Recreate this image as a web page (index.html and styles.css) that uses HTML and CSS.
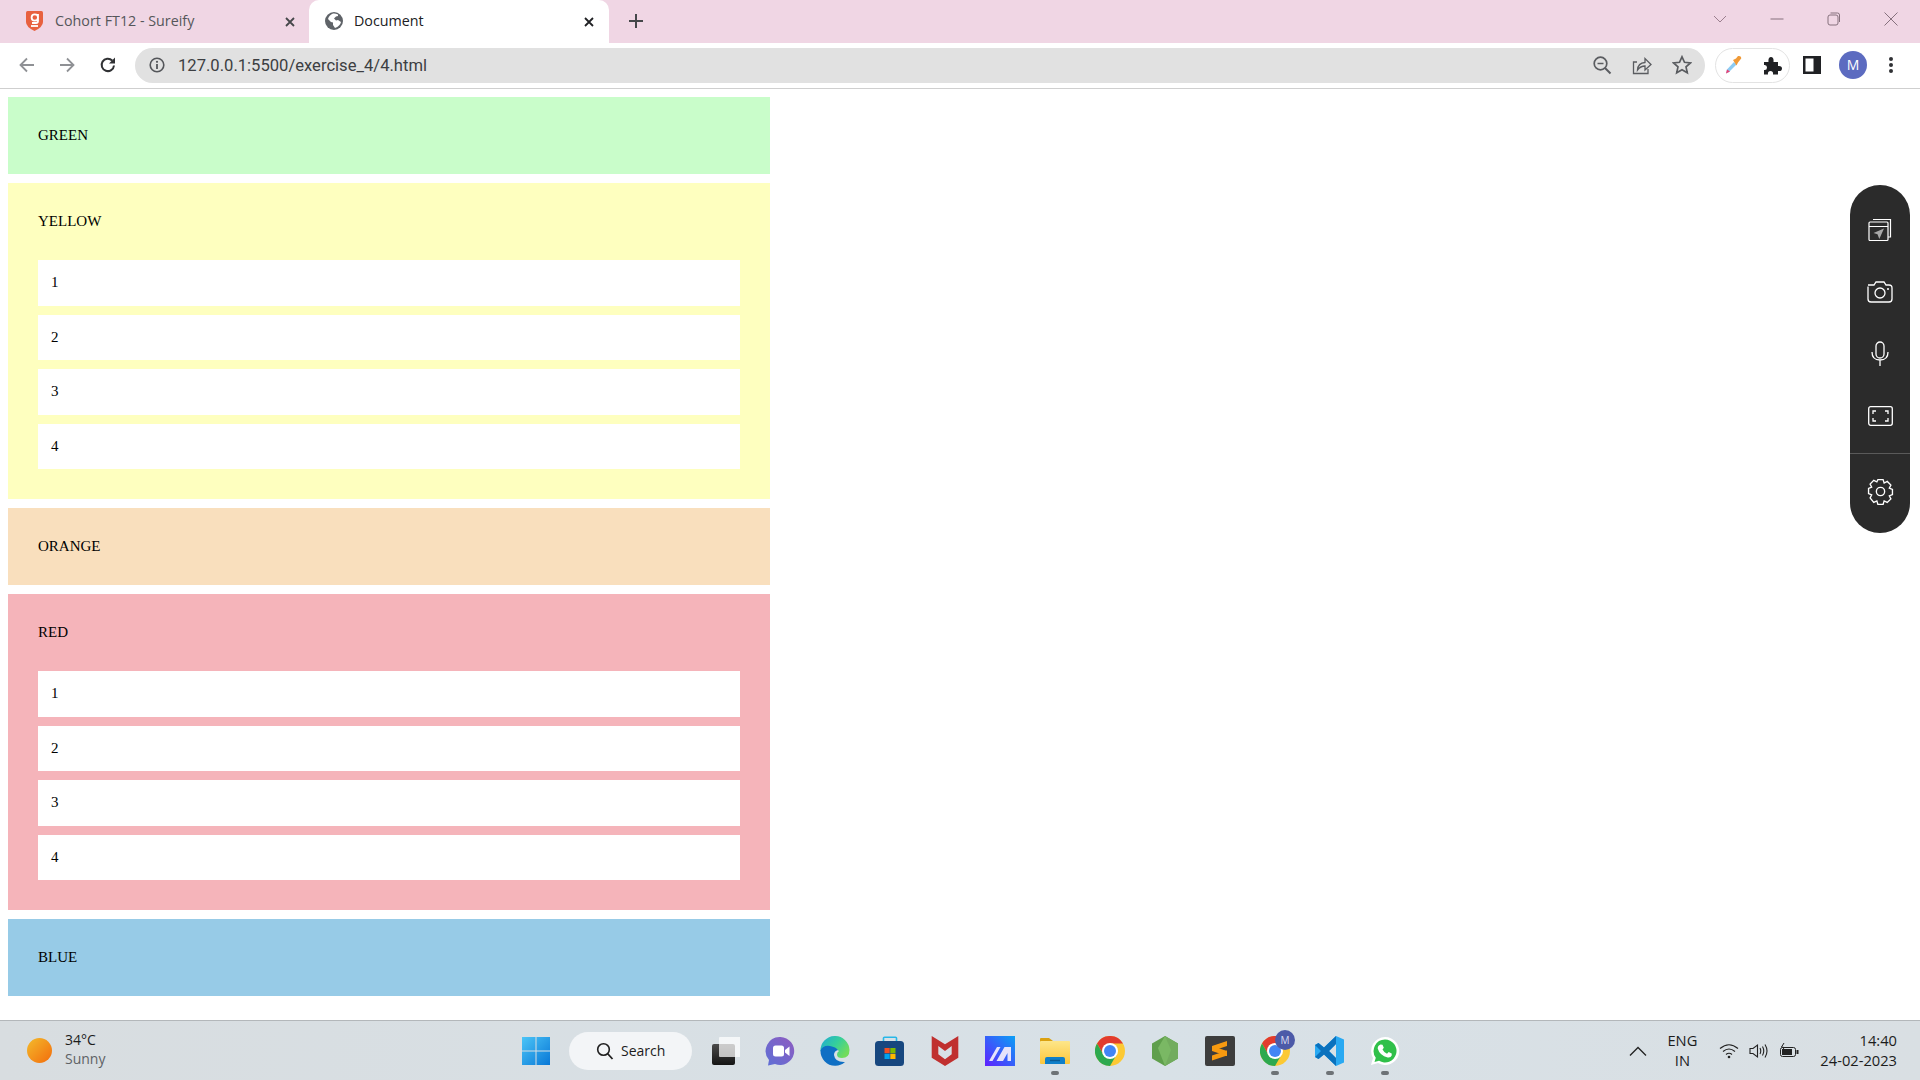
FILE: index.html
```html
<!DOCTYPE html>
<html lang="en">
<head>
    <meta charset="UTF-8">
    <title>Document</title>
    <link rel="stylesheet" href="styles.css">
</head>
<body>
    <div class="tabstrip">
        <div class="tab">
            <svg class="favicon" width="17" height="20" viewBox="0 0 17 20"><path d="M0 1.5Q0 0 1.5 0h14Q17 0 17 1.5V11q0 5-8.500 9Q0 16 0 11z" fill="#e8613f"/><path d="M12 3v7q0 2-2 2H6M12 6.500a3.200 3.200 0 1 1-6.400 0 3.200 3.200 0 0 1 6.400 0z" fill="none" stroke="#fff" stroke-width="1.800"/><path d="M5 15h7" stroke="#fff" stroke-width="1.800"/></svg>
            <span class="tab-title">Cohort FT12 - Sureify</span>
            <svg class="tab-close" width="12" height="12" viewBox="0 0 12 12"><path d="M2 2l8 8M10 2l-8 8" stroke="#45474a" stroke-width="1.800"/></svg>
        </div>
        <div class="tab tab-active">
            <svg class="favicon" width="18" height="18" viewBox="0 0 18 18"><circle cx="9" cy="9" r="9" fill="#5f6368"/><path d="M8 1.500Q4 3 3 7l3 3 2 .5V13l2 3q5-2 6-6l-3-2-2 .5-2-2 2-2 2-.5V2.500Q10 1 8 1.500z" fill="#fff"/></svg>
            <span class="tab-title">Document</span>
            <svg class="tab-close" width="12" height="12" viewBox="0 0 12 12"><path d="M2 2l8 8M10 2l-8 8" stroke="#202124" stroke-width="1.800"/></svg>
        </div>
        <svg class="newtab" width="16" height="16" viewBox="0 0 16 16"><path d="M8 1v14M1 8h14" stroke="#45474a" stroke-width="2"/></svg>
        <div class="window-controls">
            <svg width="16" height="16" viewBox="0 0 16 16"><path d="M2 5l6 6 6-6" fill="none" stroke="#9b7f8e" stroke-width="1"/></svg>
            <svg width="16" height="16" viewBox="0 0 16 16"><path d="M1.500 8h13" stroke="#86717d" stroke-width="1"/></svg>
            <svg width="16" height="16" viewBox="0 0 16 16"><rect x="2" y="4" width="10" height="10" rx="2" fill="none" stroke="#86717d"/><path d="M4.500 2h7q2 0 2 2v7" fill="none" stroke="#86717d"/></svg>
            <svg width="16" height="16" viewBox="0 0 16 16"><path d="M1.500 1.500l13 13M14.500 1.500l-13 13" stroke="#86717d" stroke-width="1"/></svg>
        </div>
    </div>

    <div class="toolbar">
        <div class="nav-btn"><svg width="18" height="18" viewBox="0 0 18 18"><path d="M16 9H3M9 2.500L2.500 9 9 15.500" fill="none" stroke="#8f9195" stroke-width="1.800"/></svg></div>
        <div class="nav-btn"><svg width="18" height="18" viewBox="0 0 18 18"><path d="M2 9h13M9 2.500L15.500 9 9 15.500" fill="none" stroke="#8f9195" stroke-width="1.800"/></svg></div>
        <div class="nav-btn nav-reload"><svg width="18" height="18" viewBox="0 0 18 18"><path d="M15 9.500A6.200 6.200 0 1 1 13.200 4.500" fill="none" stroke="#303134" stroke-width="2"/><path d="M16 1.500V7.500H10z" fill="#303134"/></svg></div>
        <div class="omnibox">
            <svg class="info" width="16" height="16" viewBox="0 0 16 16"><circle cx="8" cy="8" r="6.800" fill="none" stroke="#54565a" stroke-width="1.600"/><path d="M8 7v5" stroke="#54565a" stroke-width="1.800"/><circle cx="8" cy="4.800" r="1.100" fill="#54565a"/></svg>
            <span class="url">127.0.0.1:5500/exercise_4/4.html</span>
            <div class="omni-icons">
                <svg width="20" height="20" viewBox="0 0 20 20"><circle cx="8.500" cy="8.500" r="6.300" fill="none" stroke="#5a5c60" stroke-width="1.700"/><path d="M5.500 8.500h6" stroke="#5a5c60" stroke-width="1.500"/><path d="M13 13l5.500 5.500" stroke="#5a5c60" stroke-width="2"/></svg>
                <svg width="20" height="20" viewBox="0 0 20 20"><path d="M5 7H1.500v11.500H16V14" fill="none" stroke="#5a5c60" stroke-width="1.300"/><path d="M5.500 15q.5-7 7.500-7.500V3.500l6 6-6 5.500V11q-4.500 0-7.500 4z" fill="none" stroke="#5a5c60" stroke-width="1.300"/></svg>
                <svg width="20" height="20" viewBox="0 0 20 20"><path d="M10 1.800l2.500 5.500 6 .6-4.500 4 1.300 5.900-5.300-3-5.300 3L6 11.900l-4.500-4 6-.6z" fill="none" stroke="#5a5c60" stroke-width="1.700"/></svg>
            </div>
        </div>
        <div class="ext-pill">
            <svg width="18" height="20" viewBox="0 0 18 20"><path d="M2 18.500l1-4L10 7l2.500 2.500L5 17z" fill="#8ccbf2"/><path d="M2 18.500l1-4 3 2z" fill="#ea3f73"/><path d="M9 5l3-1.500L14 1q2-.5 3 1t-1 3l-2 2.500-1.500 3z" fill="#f09a37"/></svg>
            <svg width="19" height="19" viewBox="0 0 19 19"><path d="M1 6h4.500Q5 1 8 1t2.500 5H15v4q4-.5 4 2.500T15 15v3.500H10q.5-3.500-2.500-3.500T5 18.500H1V14q3 .5 3-2.500T1 9z" fill="#202124"/></svg>
        </div>
        <div class="toolbar-end">
            <svg width="18" height="18" viewBox="0 0 18 18"><rect width="18" height="18" fill="#202124"/><rect x="2.500" y="2.500" width="8" height="13" fill="#fff"/></svg>
            <div class="avatar">M</div>
            <svg width="6" height="18" viewBox="0 0 6 18"><circle cx="3" cy="3" r="2" fill="#303134"/><circle cx="3" cy="9" r="2" fill="#303134"/><circle cx="3" cy="15" r="2" fill="#303134"/></svg>
        </div>
    </div>

    <main class="page">
        <div class="box green">
            <div class="box-title">GREEN</div>
        </div>
        <div class="box yellow">
            <div class="box-title">YELLOW</div>
            <div class="items">
                <div class="item">1</div>
                <div class="item">2</div>
                <div class="item">3</div>
                <div class="item">4</div>
            </div>
        </div>
        <div class="box orange">
            <div class="box-title">ORANGE</div>
        </div>
        <div class="box red">
            <div class="box-title">RED</div>
            <div class="items">
                <div class="item">1</div>
                <div class="item">2</div>
                <div class="item">3</div>
                <div class="item">4</div>
            </div>
        </div>
        <div class="box blue">
            <div class="box-title">BLUE</div>
        </div>

        <div class="capture-bar">
            <div class="capture-btn"><svg width="24" height="24" viewBox="0 0 24 24"><path d="M5 1.500h17.500V19H20" fill="none" stroke="#fff" stroke-width="1.200"/><rect x="1" y="4" width="19" height="18.500" rx="1" fill="#2b2b2b" stroke="#fff" stroke-width="1.200"/><path d="M1 8.500h19" stroke="#fff"/><path d="M16 10.500L5.500 15l4 1.200 1.800 4.800z" fill="#a8a8a8"/></svg></div>
            <div class="capture-btn"><svg width="26" height="22" viewBox="0 0 26 22"><path d="M1 5.500V18q0 3 3 3h18q3 0 3-3V7q0-3-3-3h-3l-2-3H9L7 4H1" fill="none" stroke="#fff" stroke-width="1.300"/><circle cx="13" cy="12" r="5" fill="none" stroke="#fff" stroke-width="1.300"/><circle cx="21" cy="8" r="1" fill="#fff"/></svg></div>
            <div class="capture-btn"><svg width="18" height="26" viewBox="0 0 18 26"><rect x="5" y="1" width="8" height="16" rx="4" fill="none" stroke="#fff" stroke-width="1.300"/><path d="M1 11q0 8 8 8t8-8M9 19v6" fill="none" stroke="#fff" stroke-width="1.300"/></svg></div>
            <div class="capture-btn"><svg width="25" height="20" viewBox="0 0 25 20"><rect x=".7" y=".7" width="23.600" height="18.600" rx="2" fill="none" stroke="#fff" stroke-width="1.300"/><path d="M5 8V5h3M17 5h3v3M20 12v3h-3M8 15H5v-3" fill="none" stroke="#fff" stroke-width="1.300"/></svg></div>
            <div class="capture-sep"></div>
            <div class="capture-btn capture-settings"><svg width="27" height="27" viewBox="0 0 26 26"><path d="M10.500 1.500h5l1 3.300 3-1.500 3.500 3.500-1.500 3 3 1.200v5l-3 1.200 1.500 3-3.500 3.300-3-1.500-1 3.500h-5l-1-3.500-3 1.500L3 19.200l1.500-3-3-1.200V10l3-1.200-1.500-3 3.500-3.500 3 1.500z" fill="none" stroke="#fff" stroke-width="1.300"/><circle cx="13" cy="13" r="4" fill="none" stroke="#fff" stroke-width="1.300"/></svg></div>
        </div>
    </main>

    <footer class="taskbar">
        <div class="weather">
            <div class="sun"></div>
            <div class="weather-text">
                <div>34°C</div>
                <div class="muted">Sunny</div>
            </div>
        </div>
        <div class="task-icon">
            <svg width="30" height="30" viewBox="0 0 30 30"><defs><linearGradient id="win" x1="0" y1="0" x2="1" y2="1"><stop offset="0" stop-color="#4cc5f7"/><stop offset="1" stop-color="#0877d6"/></linearGradient></defs><path d="M1 1h13.500v13.500H1zM15.500 1H29v13.500H15.500zM1 15.500h13.500V29H1zM15.500 15.500H29V29H15.500z" fill="url(#win)"/></svg>
        </div>
        <div class="search-pill">
            <svg width="18" height="18" viewBox="0 0 18 18"><circle cx="7.500" cy="7.500" r="5.800" fill="none" stroke="#1f1f1f" stroke-width="1.600"/><path d="M11.500 11.500l5 5.500" stroke="#1f1f1f" stroke-width="1.800"/></svg>
            <span>Search</span>
        </div>
        <div class="task-icon task-first">
            <svg width="30" height="30" viewBox="0 0 30 30"><defs><linearGradient id="tv" x1="0" y1="0" x2="0" y2="1"><stop offset="0" stop-color="#4a4a4a"/><stop offset="1" stop-color="#141414"/></linearGradient></defs><rect x="2" y="8" width="23" height="21" rx="2" fill="url(#tv)"/><rect x="9" y="1" width="22" height="20" rx="1" fill="#fff" fill-opacity=".72"/></svg>
        </div>
        <div class="task-icon">
            <svg width="30" height="30" viewBox="0 0 30 30"><defs><linearGradient id="meet" x1="1" y1="0" x2="0" y2="1"><stop offset="0" stop-color="#8f5cc0"/><stop offset="1" stop-color="#5d6fd6"/></linearGradient></defs><path d="M15.500 1a14 14 0 1 1-5.500 27l-7 1.500 1-5.500A14 14 0 0 1 15.500 1z" fill="url(#meet)"/><rect x="8" y="9.500" width="11" height="11" rx="2.500" fill="#fff"/><path d="M20 14l4.500-3.500v9.500L20 16.500z" fill="#fff"/></svg>
        </div>
        <div class="task-icon">
            <svg width="30" height="30" viewBox="0 0 30 30"><defs><linearGradient id="edge" x1="0" y1="0" x2="1" y2=".6"><stop offset="0" stop-color="#1fa9d8"/><stop offset=".55" stop-color="#35cf9b"/><stop offset="1" stop-color="#72dc5c"/></linearGradient></defs><path d="M.5 15A14.500 14.500 0 0 1 29.500 14Q29.500 22 22 22 17 22 17 18.500 17 16 19 15 15 11 10 13 3 16 .5 15z" fill="url(#edge)"/><path d="M.5 14.500Q3 9 10 10 16 11 18 14 14 15 14 19 15 26.500 25 26 20.500 30 15 29.800A14.800 14.800 0 0 1 .5 14.500z" fill="#0f6fc4"/></svg>
        </div>
        <div class="task-icon">
            <svg width="30" height="30" viewBox="0 0 30 30"><path d="M8.500 6V2q0-.800 1-.800h11q1 0 1 .8v4" fill="none" stroke="#27b7e8" stroke-width="1.600"/><rect x="0" y="5" width="29" height="25" rx="3.500" fill="#17477f"/><path d="M9.500 12h5.200v5.200H9.500z" fill="#f25022"/><path d="M15.300 12h5.200v5.200h-5.200z" fill="#7fba00"/><path d="M9.500 17.800h5.200V23H9.500z" fill="#00a4ef"/><path d="M15.300 17.800h5.200V23h-5.200z" fill="#ffb900"/></svg>
        </div>
        <div class="task-icon">
            <svg width="30" height="30" viewBox="0 0 30 30"><path d="M1.700 0L15 8.300 28.300 0V21.700L15 30 1.700 21.700zM8.300 10V18.300L15 23.300 21.700 18.300V10L15 15z" fill="#c0302f" fill-rule="evenodd"/></svg>
        </div>
        <div class="task-icon">
            <svg width="30" height="30" viewBox="0 0 30 30"><defs><linearGradient id="mark" x1="1" y1="0" x2="0" y2="1"><stop offset="0" stop-color="#0aa0f5"/><stop offset="1" stop-color="#6020ff"/></linearGradient></defs><rect width="30" height="30" fill="url(#mark)"/><path d="M4 25L12 11h3.500l-8 14zM11.500 25l8-14H26v14h-3.500v-8L18 25z" fill="#e6e3fb"/></svg>
        </div>
        <div class="task-icon">
            <svg width="30" height="30" viewBox="0 0 30 30"><defs><linearGradient id="fold" x1="0" y1="0" x2="0" y2="1"><stop offset="0" stop-color="#fde68a"/><stop offset="1" stop-color="#fcc63b"/></linearGradient></defs><path d="M0 3q0-1 1-1h8l4 3v3H0z" fill="#dba110"/><rect y="5" width="30" height="23" rx="1" fill="url(#fold)"/><path d="M5 23q0-2 2-2h16q2 0 2 2v5H5z" fill="#0f7fc9"/><path d="M10 24.500h10" stroke="#0a5a93" stroke-width="1.400"/></svg>
        </div>
        <div class="task-icon">
            <svg width="30" height="30" viewBox="0 0 30 30"><circle cx="15" cy="15" r="15" fill="#fcc934"/><path d="M2 7.500A15 15 0 0 1 28 7.500H15L8.500 18.750z" fill="#e23b2e"/><path d="M2 7.500A15 15 0 0 0 15 30L21.500 18.750H8.500z" fill="#2da94f"/><circle cx="15" cy="15" r="8" fill="#fff"/><circle cx="15" cy="15" r="6" fill="#4285f4"/></svg>
        </div>
        <div class="task-icon">
            <svg width="30" height="30" viewBox="0 0 30 30"><path d="M15 0l13 7.500v15L15 30 2 22.500v-15z" fill="#5f9f4c"/><path d="M15 0l13 7.500v15L15 30z" fill="#72ac5e"/><path d="M15 0L8 12l7 18 6-16z" fill="#7ab864"/></svg>
        </div>
        <div class="task-icon">
            <svg width="30" height="30" viewBox="0 0 30 30"><rect width="30" height="30" rx="2" fill="#3d3d3d"/><path d="M7 10l15-5v5L7 15zM7 10l15 5v5L7 15zM22 14.500v5l-15 5v-5z" fill="#f79a10"/></svg>
        </div>
        <div class="task-icon running">
            <svg width="30" height="30" viewBox="0 0 30 30"><circle cx="15" cy="15" r="15" fill="#fcc934"/><path d="M2 7.500A15 15 0 0 1 28 7.500H15L8.500 18.750z" fill="#e23b2e"/><path d="M2 7.500A15 15 0 0 0 15 30L21.500 18.750H8.500z" fill="#2da94f"/><circle cx="15" cy="15" r="8" fill="#fff"/><circle cx="15" cy="15" r="6" fill="#4285f4"/></svg>
            <div class="profile-badge">M</div>
        </div>
        <div class="task-icon running">
            <svg width="30" height="30" viewBox="0 0 30 30"><path d="M21 0l8 3.500v23L21 30 9 18.500l-5.500 4.500L0 21v-12l3.500-2L9 11.500zM21 8l-7 7 7 7z" fill="#29a9f2" fill-rule="evenodd"/><path d="M21 0L9 11.500 3.500 7 0 9l6 6-6 6 3.500 2L9 18.500 21 30v-8l-7-7 7-7z" fill="#0a71bd"/></svg>
        </div>
        <div class="task-icon running">
            <svg width="30" height="30" viewBox="0 0 30 30"><path d="M15 1a14 14 0 1 1-7 26l-7 2 2-7A14 14 0 0 1 15 1z" fill="#fff"/><path d="M15 3.500a11.500 11.500 0 1 1-6 21.300l-4.500 1.300 1.300-4.400A11.500 11.500 0 0 1 15 3.500z" fill="#30c04a"/><path d="M10.500 8.500l2 .2 1.300 3-1.300 1.800q1.500 3 4.500 4.300l1.700-1.700 3 1.400v2q-1 2.500-4 2-8-2-10-9 0-3 2.800-4z" fill="#fff"/></svg>
        </div>
        <div class="tray">
            <svg width="18" height="10" viewBox="0 0 18 10"><path d="M1 9.500L9 1.500l8 8" fill="none" stroke="#222" stroke-width="1.300"/></svg>
            <div class="lang">
                <div>ENG</div>
                <div>IN</div>
            </div>
            <div class="tray-icons">
                <svg width="20" height="16" viewBox="0 0 20 16"><path d="M1 5.500q9-7.500 18 0M4 8.500q6-5 12 0M7 11.500q3-2.500 6 0" fill="none" stroke="#222" stroke-width="1.200"/><circle cx="10" cy="14" r="1.300" fill="#222"/></svg>
                <svg width="20" height="16" viewBox="0 0 20 16"><path d="M1 5.500h3L8.500 2v12L4 10.500H1z" fill="none" stroke="#222" stroke-width="1.100"/><path d="M11 5q1.500 3 0 6M13.500 3.500q2.500 4.500 0 9M16 1.500q4 6.500 0 13" fill="none" stroke="#222" stroke-width="1.100"/></svg>
                <svg width="20" height="16" viewBox="0 0 20 16"><rect x="1.500" y="4.500" width="15" height="9" rx="2" fill="none" stroke="#222"/><rect x="3" y="6" width="10" height="6" fill="#222"/><rect x="17.500" y="7" width="2" height="4" fill="#222"/><path d="M5 0L2.500 4 5 4.500 3.500 8" fill="none" stroke="#222" stroke-width="1"/></svg>
            </div>
            <div class="clock">
                <div>14:40</div>
                <div>24-02-2023</div>
            </div>
        </div>
    </footer>
</body>
</html>
```

FILE: styles.css
```css
* {
    box-sizing: border-box;
}

html, body {
    margin: 0;
    padding: 0;
    height: 100%;
}

body {
    display: flex;
    flex-direction: column;
    height: 1080px;
    overflow: hidden;
    background-color: #fff;
    font-family: "Liberation Serif", serif;
}

/* browser chrome */
.tabstrip {
    display: flex;
    align-items: stretch;
    height: 43px;
    background-color: #f0d6e4;
    font-family: "Open Sans", sans-serif;
    font-size: 14.3px;
}

.tab {
    display: flex;
    align-items: center;
    width: 300px;
    padding: 0 14px 0 16px;
    color: #55565a;
}

.tab:first-child {
    width: 309px;
    padding-left: 26px;
    padding-right: 13px;
}

.tab-active {
    background-color: #fff;
    border-radius: 10px 10px 0 0;
    color: #202124;
}

.favicon {
    flex: none;
    margin-right: 12px;
    margin-bottom: 1px;
}

.tab-active .favicon {
    margin-right: 11px;
}

.tab-title {
    flex: 1;
    margin-bottom: 2px;
    white-space: nowrap;
}

.newtab {
    align-self: center;
    margin: 0 0 2px 19px;
}

.window-controls {
    display: flex;
    align-items: center;
    gap: 41px;
    margin-left: auto;
    padding: 0 21px 6px 0;
}

.toolbar {
    display: flex;
    align-items: center;
    height: 46px;
    padding: 0 0 1px 7px;
    border-bottom: 1px solid #cfcfcf;
    background-color: #fff;
}

.nav-btn {
    display: flex;
    justify-content: center;
    align-items: center;
    width: 40px;
}

.nav-reload {
    padding-left: 2px;
}

.omnibox {
    display: flex;
    align-items: center;
    width: 1570px;
    height: 35px;
    margin-left: 8px;
    padding: 0 13px 0 14px;
    background-color: #e1e1e1;
    border-radius: 18px;
}

.url {
    margin-left: 13px;
    font-family: "Roboto", sans-serif;
    font-size: 16.6px;
    color: #3c3e42;
}

.omni-icons {
    display: flex;
    align-items: center;
    gap: 20px;
    margin-left: auto;
}

.ext-pill {
    display: flex;
    justify-content: space-between;
    align-items: center;
    width: 75px;
    height: 35px;
    margin-left: 10px;
    padding: 0 7px 0 8px;
    border: 1px solid #e3e3e3;
    border-radius: 18px;
}

.toolbar-end {
    display: flex;
    align-items: center;
    margin-left: 13px;
}

.avatar {
    width: 28px;
    height: 28px;
    margin: 0 21px 0 18px;
    border-radius: 50%;
    background-color: #5c6bc0;
    color: #fff;
    font-family: "Open Sans", sans-serif;
    font-size: 14px;
    line-height: 28px;
    text-align: center;
}

/* page content */
.page {
    position: relative;
    flex: 1;
    display: flex;
    flex-direction: column;
    align-items: flex-start;
    gap: 9px;
    padding: 8px 8px 0;
    font-size: 15px;
    color: #000;
}

.box {
    width: 762px;
    padding: 30px;
    line-height: 17px;
}

.box-title {
    height: 17px;
}

.items {
    display: flex;
    flex-direction: column;
    gap: 9px;
    margin-top: 30px;
}

.item {
    height: 45.5px;
    padding: 14px 13px;
    background-color: #fff;
}

.green { background-color: #c9fdca; }
.yellow { background-color: #feffbf; }
.orange { background-color: #f9dfbd; }
.red { background-color: #f5b4ba; }
.blue { background-color: #97cbe7; }

/* floating capture toolbar */
.capture-bar {
    position: absolute;
    top: 96px;
    right: 10px;
    display: flex;
    flex-direction: column;
    width: 60px;
    height: 348px;
    padding-top: 14px;
    border-radius: 30px;
    background-color: #2b2b2b;
}

.capture-btn {
    display: flex;
    justify-content: center;
    align-items: center;
    flex: none;
    height: 62px;
}

.capture-sep {
    flex: none;
    height: 1px;
    margin-top: 6px;
    background-color: #5a5a5a;
}

.capture-settings {
    height: 74px;
}

/* windows taskbar */
.taskbar {
    display: flex;
    align-items: center;
    height: 60px;
    border-top: 1px solid #b3b7ba;
    background: linear-gradient(90deg, #d8dde0, #d8e1e7 60%, #d9dfe3);
    font-family: "Open Sans", sans-serif;
    font-size: 14px;
    color: #1c1c1c;
}

.weather {
    display: flex;
    align-items: center;
    width: 508px;
    padding-left: 27px;
}

.sun {
    width: 25px;
    height: 25px;
    margin-right: 13px;
    border-radius: 50%;
    background: linear-gradient(135deg, #f3bb2c, #f36c0c);
}

.weather-text {
    margin-bottom: 3px;
    line-height: 19px;
}

.muted {
    color: #5e6265;
}

.task-icon {
    position: relative;
    display: flex;
    justify-content: center;
    align-items: center;
    flex: none;
    width: 55px;
}

.task-first {
    margin-left: 5px;
}

/* marker under apps that are open */
.running::after,
.task-icon:nth-of-type(10)::after {
    content: "";
    position: absolute;
    bottom: -9px;
    left: 24px;
    width: 8px;
    height: 4px;
    border-radius: 2px;
    background-color: #6d7276;
}

.search-pill {
    display: flex;
    align-items: center;
    flex: none;
    gap: 7px;
    width: 123px;
    height: 38px;
    margin-left: 6px;
    padding-left: 27px;
    border-radius: 19px;
    background-color: #f3f5f7;
}

.profile-badge {
    position: absolute;
    top: -6px;
    right: 7px;
    width: 20px;
    height: 20px;
    border-radius: 50%;
    background-color: #4c5aa8;
    color: #d9dcf0;
    font-size: 10px;
    line-height: 20px;
    text-align: center;
}

.tray {
    display: flex;
    align-items: center;
    margin-left: auto;
    padding-right: 23px;
    font-size: 14.7px;
}

.lang {
    margin: 0 0 1px 20px;
    line-height: 20px;
    text-align: center;
}

.tray-icons {
    display: flex;
    align-items: center;
    gap: 10px;
    margin-left: 22px;
}

.clock {
    margin: 0 0 2px 21px;
    line-height: 20px;
    text-align: right;
}
```
